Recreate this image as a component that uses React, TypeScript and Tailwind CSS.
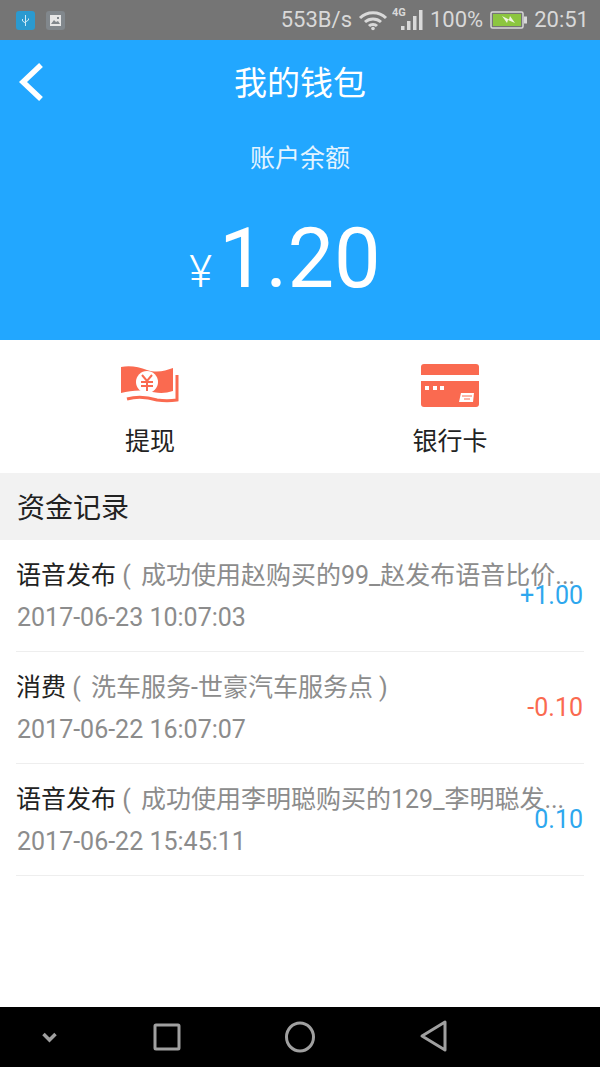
const FONT = "font-['Roboto','Noto_Sans_CJK_SC',sans-serif]";

const records = [
  { title: '语音发布', note: '成功使用赵购买的99_赵发布语音比价...', time: '2017-06-23 10:07:03', amount: '+1.00', color: 'text-[#2ea7ee]' },
  { title: '消费', note: '洗车服务-世豪汽车服务点', time: '2017-06-22 16:07:07', amount: '-0.10', color: 'text-[#fa6a50]' },
  { title: '语音发布', note: '成功使用李明聪购买的129_李明聪发...', time: '2017-06-22 15:45:11', amount: '0.10', color: 'text-[#2ea7ee]' },
];

function StatusBar() {
  return (
    <div className="h-10 bg-[#757575] flex items-center pl-4 pr-[11px] text-[#d9d9d9]">
      <div className="w-[19px] h-[19px] rounded-[3px] bg-[#2b9ad0] flex items-center justify-center">
        <svg width="9" height="13" viewBox="0 0 9 13" fill="none" stroke="#cfeaf5" strokeWidth="1">
          <path d="M4.5 1v11M4.5 9L1.5 7V5M4.5 8l3-2V4.5" />
        </svg>
      </div>
      <div className="w-[19px] h-[19px] rounded-[3px] bg-[#81878c] flex items-center justify-center ml-[11px]">
        <svg width="11" height="11" viewBox="0 0 11 11">
          <rect width="11" height="11" fill="#e6e6e6" />
          <path d="M1 9l3-4 2 2 2-1 2 3z" fill="#81878c" />
          <rect x="7" y="2" width="2" height="2" fill="#81878c" />
        </svg>
      </div>
      <div className="flex-1" />
      <span className="text-[22px] leading-none">553B/s</span>
      <svg className="ml-[6px]" width="30" height="22" viewBox="0 0 30 22" fill="none" stroke="#d9d9d9" strokeWidth="3">
        <path d="M2 9c7-7 19-7 26 0M7 13c4.500-4 11.500-4 16 0M11 17c2-2 6-2 8 0" />
        <circle cx="15" cy="19.500" r="1.800" fill="#d9d9d9" stroke="none" />
      </svg>
      <svg className="ml-[4px]" width="32" height="26" viewBox="0 0 32 26" fill="#d9d9d9">
        <text x="0" y="9" fontSize="11" fontWeight="700" fontFamily="Roboto">4G</text>
        <rect x="9" y="19" width="3.500" height="4" />
        <rect x="15" y="14" width="3.500" height="9" />
        <rect x="21" y="9" width="3.500" height="14" />
        <rect x="27" y="3" width="3.500" height="20" />
      </svg>
      <span className="text-[22px] leading-none ml-[6px]">100%</span>
      <svg className="ml-[7px]" width="38" height="20" viewBox="0 0 38 20">
        <rect x="1" y="2" width="32" height="16" rx="1.500" fill="none" stroke="#d9d9d9" strokeWidth="1.500" />
        <rect x="3" y="4" width="28" height="12" fill="#8cc63f" />
        <rect x="34" y="6.500" width="3" height="7" fill="#d9d9d9" />
        <path d="M12 6l7 3.500 1-3.500 5 7-7-3-1 3z" fill="#eef5e0" />
      </svg>
      <span className="text-[22px] leading-none ml-[6px]">20:51</span>
    </div>
  );
}

function Balance() {
  return (
    <div className="h-[300px] bg-[#22a7ff] text-white flex flex-col items-center relative">
      <svg className="absolute left-[16px] top-[20px]" width="32" height="44" viewBox="0 0 32 44" fill="none" stroke="#fff" strokeWidth="5.500">
        <path d="M25 5L7 22l18 17" />
      </svg>
      <div className="mt-[23px] text-[33px] leading-[42px]">我的钱包</div>
      <div className="mt-[36px] text-[25px] leading-[36px] text-[#e4f4ff]">账户余额</div>
      <div className="mt-[40px] flex items-baseline leading-none -translate-x-[15px]">
        <span className="text-[44px] font-light mr-[7px]">¥</span>
        <span className="text-[83px]">1.20</span>
      </div>
    </div>
  );
}

function MoneyIcon() {
  return (
    <svg width="60" height="42" viewBox="0 0 60 42">
      <path d="M1 3c9-2 18 0 26 3 10 3 18 1 26-2v23c-9 3-17 2-26 0-9-1-18 0-26 2z" fill="#fa6a50" />
      <path d="M57 11v25c-7 1-13 1-20 0-10-3-19-4-30-1" fill="none" stroke="#fa6a50" strokeWidth="3" />
      <circle cx="27" cy="18" r="11" fill="#fff" />
      <path d="M22 11l5 6 5-6M21 18h12M21 22h12M27 17v10" fill="none" stroke="#fa6a50" strokeWidth="2" />
    </svg>
  );
}

function CardIcon() {
  return (
    <svg width="60" height="44" viewBox="0 0 60 44">
      <path d="M1 12V4a3 3 0 0 1 3-3h52a3 3 0 0 1 3 3v8z" fill="#fa6a50" />
      <path d="M1 18h58v23a3 3 0 0 1-3 3H4a3 3 0 0 1-3-3z" fill="#fa6a50" />
      <rect x="5" y="23" width="4" height="4" fill="#fff" />
      <rect x="13" y="23" width="4" height="4" fill="#fff" />
      <rect x="20" y="23" width="4" height="4" fill="#fff" />
      <path d="M41 30h13l-1 9H39z" fill="#fff" />
      <path d="M42 33h10M44 36h6" stroke="#fa6a50" strokeWidth="1" />
    </svg>
  );
}

function Actions() {
  return (
    <div className="h-[133px] flex bg-white text-[#222]">
      <div className="flex-1 flex flex-col items-center pt-[23px]">
        <div className="h-[44px] flex items-center"><MoneyIcon /></div>
        <div className="mt-[17px] text-[25px] leading-[36px]">提现</div>
      </div>
      <div className="flex-1 flex flex-col items-center pt-[23px]">
        <div className="h-[44px] flex items-center"><CardIcon /></div>
        <div className="mt-[17px] text-[25px] leading-[36px]">银行卡</div>
      </div>
    </div>
  );
}

function Row({ title, note, time, amount, color }: (typeof records)[number]) {
  return (
    <div className="relative h-[112px] border-b border-[#eeeeee] pt-[17px] pl-px">
      <div className="-ml-px whitespace-nowrap text-[25px] leading-[38px] text-[#222]">
        {title}
        <span className="text-[#8c8c8c]"> ( <span className="ml-[4px]">{note}</span>{title === '消费' ? ' )' : ''}</span>
      </div>
      <div className="mt-[6px] text-[25px] leading-[34px] text-[#8c8c8c]">{time}</div>
      <div className={`absolute right-px top-[39px] text-[25px] leading-[34px] ${color}`}>{amount}</div>
    </div>
  );
}

export default function App() {
  return (
    <div className={`w-[600px] h-[1067px] flex flex-col bg-white overflow-hidden ${FONT}`}>
      <StatusBar />
      <Balance />
      <Actions />
      <div className="h-[67px] bg-[#f2f2f2] flex items-center pl-[17px] pt-[4px] text-[28px] text-[#222]">资金记录</div>
      <div className="flex-1 mx-[16px]">
        {records.map((r) => (
          <Row key={r.time} {...r} />
        ))}
      </div>
      <div className="h-[60px] bg-black flex items-center">
        <svg width="600" height="60" viewBox="0 0 600 60" fill="none" stroke="#a0a0a0" strokeWidth="3">
          <path d="M43.500 27l6 6 6-6" strokeWidth="3.500" />
          <rect x="155" y="18" width="24" height="24" rx="1" />
          <ellipse cx="300" cy="30" rx="13.500" ry="14" />
          <path d="M445 15v28l-23-14z" strokeLinejoin="round" />
        </svg>
      </div>
    </div>
  );
}
